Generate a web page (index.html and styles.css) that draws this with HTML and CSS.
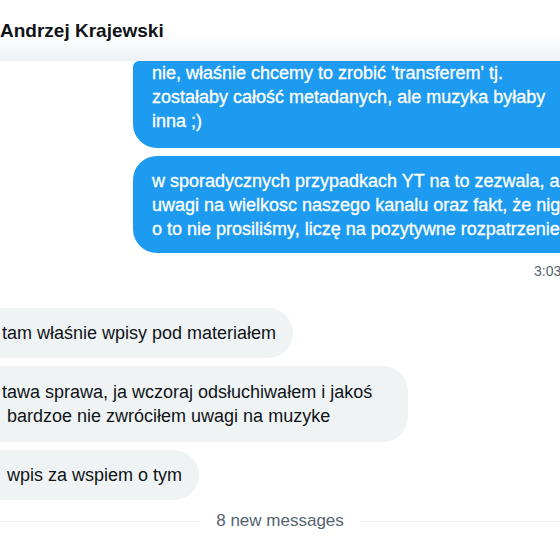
FILE: index.html
```html
<!DOCTYPE html>
<html lang="pl">

<head>
    <meta charset="UTF-8">
    <meta name="viewport" content="width=device-width, initial-scale=1.0">
    <title>Andrzej Krajewski</title>
    <link rel="stylesheet" href="styles.css">
</head>

<body>
    <div class="chat">
        <div class="chat-header">Andrzej Krajewski</div>

        <div class="messages">
            <div class="msg sent first">
                nie, właśnie chcemy to zrobić 'transferem' tj.<br>
                zostałaby całość metadanych, ale muzyka byłaby<br>
                inna ;)
            </div>
            <div class="msg sent">
                w sporadycznych przypadkach YT na to zezwala, a z uwagi<br>
                uwagi na wielkosc naszego kanalu oraz fakt, że nigdy<br>
                o to nie prosiliśmy, liczę na pozytywne rozpatrzenie
            </div>
            <div class="time">3:03</div>

            <div class="msg received">tam właśnie wpisy pod materiałem</div>
            <div class="msg received tall">
                tawa sprawa, ja wczoraj odsłuchiwałem i jakoś<br>
                &nbsp;bardzoe nie zwróciłem uwagi na muzyke
            </div>
            <div class="msg received">&nbsp;wpis za wspiem o tym</div>

            <div class="divider"><span>8 new messages</span></div>
        </div>
    </div>
</body>

</html>
```

FILE: styles.css
```css
body {
    font-family: "Liberation Sans", Arial, sans-serif;
    color: #0f1419;
    background: #fff;
    margin: 0;
    padding: 0;
    width: 560px;
    height: 560px;
    overflow: hidden;
}

.chat {
    display: flex;
    flex-direction: column;
    height: 560px;
    overflow: hidden;
}

.chat-header {
    height: 61px;
    padding-top: 20px;
    box-sizing: border-box;
    font-size: 19px;
    line-height: 22px;
    font-weight: bold;
    background: linear-gradient(to bottom, #fff 55%, #edf1f5 100%);
}

.messages {
    display: flex;
    flex-direction: column;
    gap: 8px;
}

.msg {
    font-size: 18px;
    line-height: 24px;
    white-space: nowrap;
    overflow: hidden;
}

.msg.sent {
    margin-left: 133px;
    padding: 13px 19px 12px;
    background: #1d9bf0;
    color: #fff;
    -webkit-text-stroke: 0.3px #fff;
    border-radius: 24px 0 0 24px;
}

.msg.sent.first {
    padding-top: 0;
    padding-bottom: 15px;
    border-top-left-radius: 6px;
}

.time {
    margin: 2px 0 0 534px;
    font-size: 14px;
    line-height: 16px;
    color: #536471;
    white-space: nowrap;
}

.msg.received {
    align-self: flex-start;
    padding: 13px 17px 13px 2px;
    background: #eff3f4;
    border-radius: 0 25px 25px 0;
}

.time + .msg.received {
    margin-top: 21px;
}

.msg.received.tall {
    padding-top: 14px;
    padding-bottom: 14px;
    padding-right: 36px;
}

.divider {
    display: flex;
    align-items: center;
    gap: 15px;
    margin-top: 3px;
    font-size: 17px;
    line-height: 20px;
    color: #536471;
}

.divider::before,
.divider::after {
    content: "";
    flex: 1;
    height: 1px;
    background: #eff3f4;
}
```
